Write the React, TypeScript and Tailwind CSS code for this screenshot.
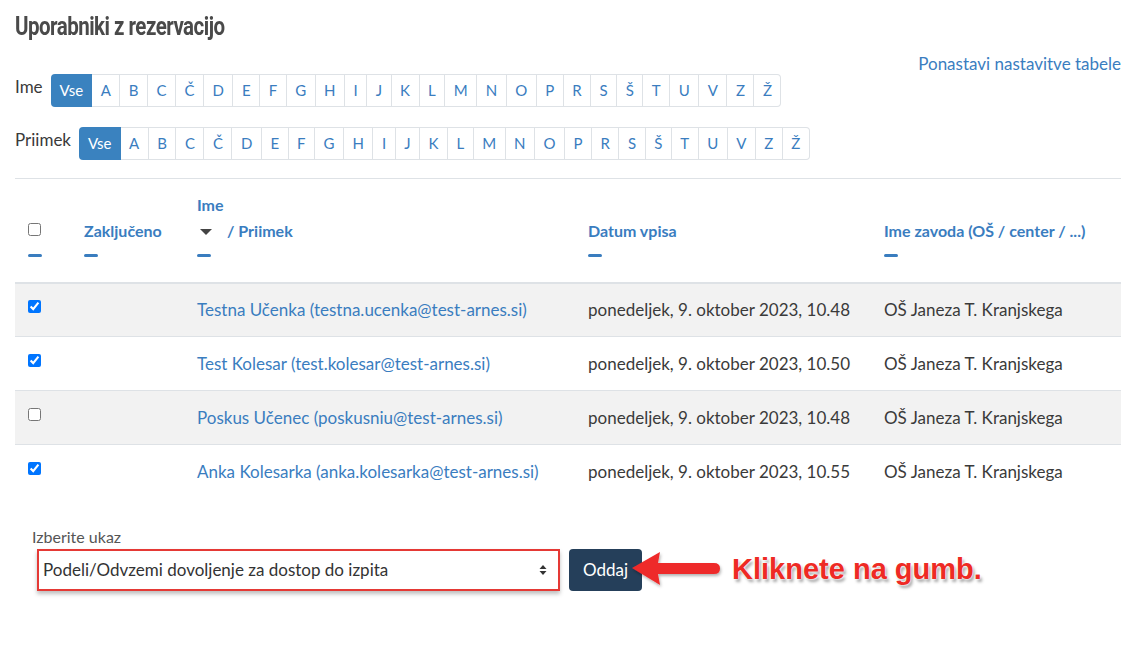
import React from "react";

const letters = ["A", "B", "C", "Č", "D", "E", "F", "G", "H", "I", "J", "K", "L", "M", "N", "O", "P", "R", "S", "Š", "T", "U", "V", "Z", "Ž"];

const rows = [
  { checked: true, name: "Testna Učenka (testna.ucenka@test-arnes.si)", date: "ponedeljek, 9. oktober 2023, 10.48" },
  { checked: true, name: "Test Kolesar (test.kolesar@test-arnes.si)", date: "ponedeljek, 9. oktober 2023, 10.50" },
  { checked: false, name: "Poskus Učenec (poskusniu@test-arnes.si)", date: "ponedeljek, 9. oktober 2023, 10.48" },
  { checked: true, name: "Anka Kolesarka (anka.kolesarka@test-arnes.si)", date: "ponedeljek, 9. oktober 2023, 10.55" },
];

const Dash = () => <div className="mt-[11px] h-[3px] w-[14px] rounded-sm bg-[#3a7dbf]" />;

const LetterBar = () => (
  <div className="flex h-[33px] text-[15px] text-[#3a7dbf]">
    <span className="flex items-center rounded-l-[4px] bg-[#3a82bf] px-[9px] text-white">Vse</span>
    {letters.map((l, i) => (
      <span
        key={l}
        className={`flex items-center border-y border-r border-[#dee2e6] px-[8.5px] ${
          i === letters.length - 1 ? "rounded-r-[4px]" : ""
        }`}
      >
        {l}
      </span>
    ))}
  </div>
);

const Arrow = () => (
  <svg width="100" height="44" viewBox="0 0 100 44" className="-ml-[14px]">
    <defs>
      <filter id="sh" x="-20%" y="-20%" width="140%" height="160%">
        <feDropShadow dx="1" dy="2" stdDeviation="1.5" floodColor="#000" floodOpacity="0.3" />
      </filter>
    </defs>
    <g filter="url(#sh)">
      <path d="M4 20 L32 4 L30 15 L86 15 Q92 15 92 20.5 Q92 26 86 26 L30 26 L32 37 Z" fill="#ee2b2b" />
    </g>
  </svg>
);

export default function App() {
  return (
    <div className="min-h-[649px] bg-white px-[15px] pt-[8px] font-['Lato','Open_Sans',sans-serif] text-[17px] text-[#3a3a3a]">
      <h2 className="origin-left scale-x-[0.82] font-['Roboto',sans-serif] text-[25px] font-bold tracking-tight text-[#4a4a4a]">
        Uporabniki z rezervacijo
      </h2>
      <div className="mt-[5px] flex justify-end pr-[2px] text-[#3a7dbf]">Ponastavi nastavitve tabele</div>
      <div className="-mt-[2px] flex items-start gap-2">
        <span>Ime</span>
        <LetterBar />
      </div>
      <div className="mt-[20px] flex items-start gap-2">
        <span>Priimek</span>
        <LetterBar />
      </div>

      <table className="mt-[18px] w-[1106px] border-collapse border-t border-[#dee2e6] text-left">
        <thead>
          <tr className="h-[104px] border-b-2 border-[#dee2e6] align-bottom text-[16px] text-[#3a7dbf]">
            <th className="w-[56px] px-[13px] pb-[25px]">
              <input type="checkbox" className="m-0 mb-[18px] block h-[13px] w-[13px]" readOnly />
              <Dash />
            </th>
            <th className="w-[113px] px-[13px] pb-[25px] font-bold">
              Zaključeno
              <Dash />
            </th>
            <th className="w-[391px] px-[13px] pb-[25px] font-bold">
              <div>Ime</div>
              <div className="mt-[2px] flex items-center">
                <svg width="14" height="8" viewBox="0 0 14 8" className="ml-[2px] mr-[14px] mt-[3px]">
                  <path d="M1 1 L13 1 L7 7 Z" fill="#444" />
                </svg>
                / Priimek
              </div>
              <Dash />
            </th>
            <th className="w-[296px] px-[13px] pb-[25px] font-bold">
              Datum vpisa
              <Dash />
            </th>
            <th className="px-[13px] pb-[25px] font-bold">
              Ime zavoda (OŠ / center / ...)
              <Dash />
            </th>
          </tr>
        </thead>
        <tbody>
          {rows.map((r, i) => (
            <tr
              key={r.name}
              className={`h-[54px] ${i < rows.length - 1 ? "border-b" : ""} border-[#dee2e6] ${
                i % 2 === 0 ? "bg-[#f2f2f2]" : "bg-white"
              }`}
            >
              <td className="px-[13px] pb-[6px]">
                <input type="checkbox" defaultChecked={r.checked} className="m-0 block h-[13px] w-[13px]" />
              </td>
              <td className="px-[13px]" />
              <td className="px-[13px] text-[#3a7dbf]">{r.name}</td>
              <td className="px-[13px]">{r.date}</td>
              <td className="px-[13px]">OŠ Janeza T. Kranjskega</td>
            </tr>
          ))}
        </tbody>
      </table>

      <div className="ml-[17px] mt-[26px] text-[16px] text-[#555]">Izberite ukaz</div>
      <div className="-mt-[1px] ml-[22px] flex items-center">
        <div className="border-2 border-[#e53935] p-[3px] shadow-[0_3px_4px_rgba(0,0,0,0.25)]">
          <div className="flex h-[32px] w-[513px] items-center justify-between bg-white pl-[1px] pr-[8px] text-[#333]">
            <span>Podeli/Odvzemi dovoljenje za dostop do izpita</span>
            <svg width="8" height="14" viewBox="0 0 8 14">
              <path d="M4 2 L7.5 6 L0.5 6 Z M4 12 L7.5 8 L0.5 8 Z" fill="#333" />
            </svg>
          </div>
        </div>
        <button className="ml-[9px] h-[42px] rounded-[4px] bg-[#253f5a] px-[14px] text-white">Oddaj</button>
        <Arrow />
        <span className="ml-[4px] font-['Liberation_Sans',Arial,sans-serif] text-[29px] font-bold text-[#ee2a24] [text-shadow:0_0_2px_#fff,0_0_2px_#fff,2px_3px_3px_rgba(0,0,0,0.35)]">
          Kliknete na gumb.
        </span>
      </div>
    </div>
  );
}
